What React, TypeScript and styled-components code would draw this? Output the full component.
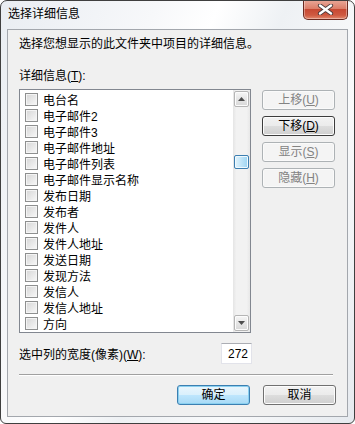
import React from 'react';
import styled, { createGlobalStyle } from 'styled-components';

const fields = [
  '电台名',
  '电子邮件2',
  '电子邮件3',
  '电子邮件地址',
  '电子邮件列表',
  '电子邮件显示名称',
  '发布日期',
  '发布者',
  '发件人',
  '发件人地址',
  '发送日期',
  '发现方法',
  '发信人',
  '发信人地址',
  '方向',
];

const App = () => {
  return (
    <>
      <GlobalStyle />
      <Window>
        <TitleBar>
          <Title>选择详细信息</Title>
          <CloseButton>
            <svg width="17" height="11" viewBox="0 0 17 11">
              <path d="M3 1.5 L14 9.5 M14 1.5 L3 9.5" stroke="#4a3a3a" strokeWidth="4.2" strokeLinecap="round" />
              <path d="M3 1.5 L14 9.5 M14 1.5 L3 9.5" stroke="#ffffff" strokeWidth="2.4" strokeLinecap="round" />
            </svg>
          </CloseButton>
        </TitleBar>

        <Client>
          <Intro>选择您想显示的此文件夹中项目的详细信息。</Intro>
          <Label>
            详细信息(<u>T</u>):
          </Label>

          <ListArea>
            <ListBox>
              <Rows>
                {fields.map((f) => (
                  <Row key={f}>
                    <Check />
                    <span>{f}</span>
                  </Row>
                ))}
              </Rows>
              <ScrollBar>
                <ArrowButton>
                  <svg width="7" height="4" viewBox="0 0 7 4">
                    <path d="M0 4 L3.5 0 L7 4 Z" fill="#4d4d4d" />
                  </svg>
                </ArrowButton>
                <Track>
                  <Thumb />
                </Track>
                <ArrowButton>
                  <svg width="7" height="4" viewBox="0 0 7 4">
                    <path d="M0 0 L7 0 L3.5 4 Z" fill="#4d4d4d" />
                  </svg>
                </ArrowButton>
              </ScrollBar>
            </ListBox>

            <SideButtons>
              <Button disabled>
                上移(<u>U</u>)
              </Button>
              <Button $focused>
                下移(<u>D</u>)
              </Button>
              <Button disabled>
                显示(<u>S</u>)
              </Button>
              <Button disabled>
                隐藏(<u>H</u>)
              </Button>
            </SideButtons>
          </ListArea>

          <WidthRow>
            <span>
              选中列的宽度(像素)(<u>W</u>):
            </span>
            <WidthInput>272</WidthInput>
          </WidthRow>

          <Separator />

          <Footer>
            <Button $default>确定</Button>
            <Button>取消</Button>
          </Footer>
        </Client>
      </Window>
    </>
  );
};

export default App;

const GlobalStyle = createGlobalStyle`
  body {
    margin: 0;
    background: #ffffff;
    font-family: "Liberation Sans", "Noto Sans CJK SC", sans-serif;
    font-size: 12px;
    color: #000;
  }
`;

const Window = styled.div`
  box-sizing: border-box;
  width: 355px;
  height: 424px;
  display: flex;
  flex-direction: column;
  border: 1px solid #3f3f3f;
  border-radius: 7px 7px 6px 6px;
  padding: 0 6px 6px 6px;
  background: linear-gradient(
    112deg,
    #e9edf2 0%,
    #f7f8fa 30%,
    #ffffff 42%,
    #eef1f4 55%,
    #f9fafb 75%,
    #e6eaef 100%
  );
  overflow: hidden;
`;

const TitleBar = styled.div`
  height: 28px;
  display: flex;
  justify-content: space-between;
  align-items: flex-start;
`;

const Title = styled.div`
  padding: 5px 0 0 1px;
  line-height: 16px;
  font-size: 12px;
  color: #000;
`;

const CloseButton = styled.div`
  box-sizing: border-box;
  width: 45px;
  height: 20px;
  margin-top: -1px;
  display: flex;
  align-items: center;
  justify-content: center;
  border: 1px solid #6b2a20;
  border-top: none;
  border-radius: 0 0 5px 5px;
  background: linear-gradient(
    #e9a99a 0%,
    #dc7e69 45%,
    #c74933 50%,
    #cf5a41 80%,
    #e38a6f 100%
  );
  box-shadow: inset 0 0 0 1px rgba(255, 255, 255, 0.35);
`;

const Client = styled.div`
  flex: 1;
  display: flex;
  flex-direction: column;
  border: 1px solid #a3a7ad;
  background: #f0f0f0;
  padding: 6px 12px 0 11px;
`;

const Intro = styled.div`
  line-height: 16px;
`;

const Label = styled.div`
  margin-top: 16px;
  line-height: 16px;
`;

const ListArea = styled.div`
  margin-top: 5px;
  display: flex;
  gap: 11px;
`;

const ListBox = styled.div`
  box-sizing: border-box;
  width: 233px;
  height: 244px;
  display: flex;
  border: 1px solid #828790;
  background: #fff;
  overflow: hidden;
`;

const Rows = styled.div`
  flex: 1;
  padding-top: 1px;
  overflow: hidden;
`;

const Row = styled.div`
  height: 16px;
  display: flex;
  align-items: center;
  gap: 5px;
  padding-left: 5px;
  white-space: nowrap;
`;

const Check = styled.div`
  box-sizing: border-box;
  width: 13px;
  height: 13px;
  border: 1px solid #8e8f8f;
  background: linear-gradient(135deg, #d6d6d6 0%, #eaeaea 60%, #f8f8f8 100%);
  box-shadow: inset 0 0 0 1px #f4f4f4;
`;

const ScrollBar = styled.div`
  width: 17px;
  display: flex;
  flex-direction: column;
  padding: 1px 0;
  background: linear-gradient(to right, #e5e5e5, #f2f2f2 20%, #f2f2f2 80%, #e8e8e8);
`;

const ArrowButton = styled.div`
  box-sizing: border-box;
  width: 15px;
  height: 16px;
  margin-left: 1px;
  display: flex;
  align-items: center;
  justify-content: center;
  border: 1px solid #b5b5b5;
  border-radius: 2px;
  background: linear-gradient(#f6f6f6, #e6e6e6 50%, #d8d8d8);
  box-shadow: inset 0 0 0 1px #fcfcfc;
`;

const Track = styled.div`
  flex: 1;
`;

const Thumb = styled.div`
  box-sizing: border-box;
  width: 15px;
  height: 14px;
  margin: 48px 0 0 1px;
  border: 1px solid #3c7fb1;
  border-radius: 2px;
  background: linear-gradient(to right, #e3f4fc, #bfe4f8 50%, #9dd5f3);
  box-shadow: inset 0 0 0 1px #f0f9fe;
`;

const SideButtons = styled.div`
  display: flex;
  flex-direction: column;
  gap: 6px;
  padding-top: 1px;
`;

const Button = styled.button<{ $focused?: boolean; $default?: boolean }>`
  box-sizing: border-box;
  width: 73px;
  height: 20px;
  padding: 0;
  font-family: "Liberation Sans", "Noto Sans CJK SC", sans-serif;
  font-size: 12px;
  line-height: 16px;
  color: #000;
  border: 1px solid ${(p) => (p.$focused ? '#3c3c3c' : p.$default ? '#3c7fb1' : '#707070')};
  border-radius: 3px;
  background: ${(p) =>
    p.$default
      ? 'linear-gradient(#eaf6fd 0%, #d9f0fc 50%, #bee6fd 51%, #a7d9f5 100%)'
      : 'linear-gradient(#f2f2f2 0%, #ebebeb 50%, #dddddd 51%, #cfcfcf 100%)'};
  box-shadow: inset 0 0 0 1px ${(p) => (p.$default ? '#8ad0f0' : '#fcfcfc')};

  &:disabled {
    color: #838383;
    border-color: #adb2b5;
    background: #f4f4f4;
    box-shadow: inset 0 0 0 1px #fafafa;
  }
`;

const WidthRow = styled.div`
  margin-top: 10px;
  width: 233px;
  display: flex;
  align-items: center;
  justify-content: space-between;
`;

const WidthInput = styled.div`
  box-sizing: border-box;
  width: 31px;
  height: 21px;
  padding-right: 3px;
  display: flex;
  align-items: center;
  justify-content: flex-end;
  background: #fff;
  border: 1px solid #e2e3ea;
  border-top-color: #abadb3;
`;

const Separator = styled.div`
  margin-top: 10px;
  width: 314px;
  height: 1px;
  background: #a0a0a0;
  border-bottom: 1px solid #ffffff;
`;

const Footer = styled.div`
  margin-top: 9px;
  width: 317px;
  display: flex;
  justify-content: flex-end;
  gap: 13px;
`;
